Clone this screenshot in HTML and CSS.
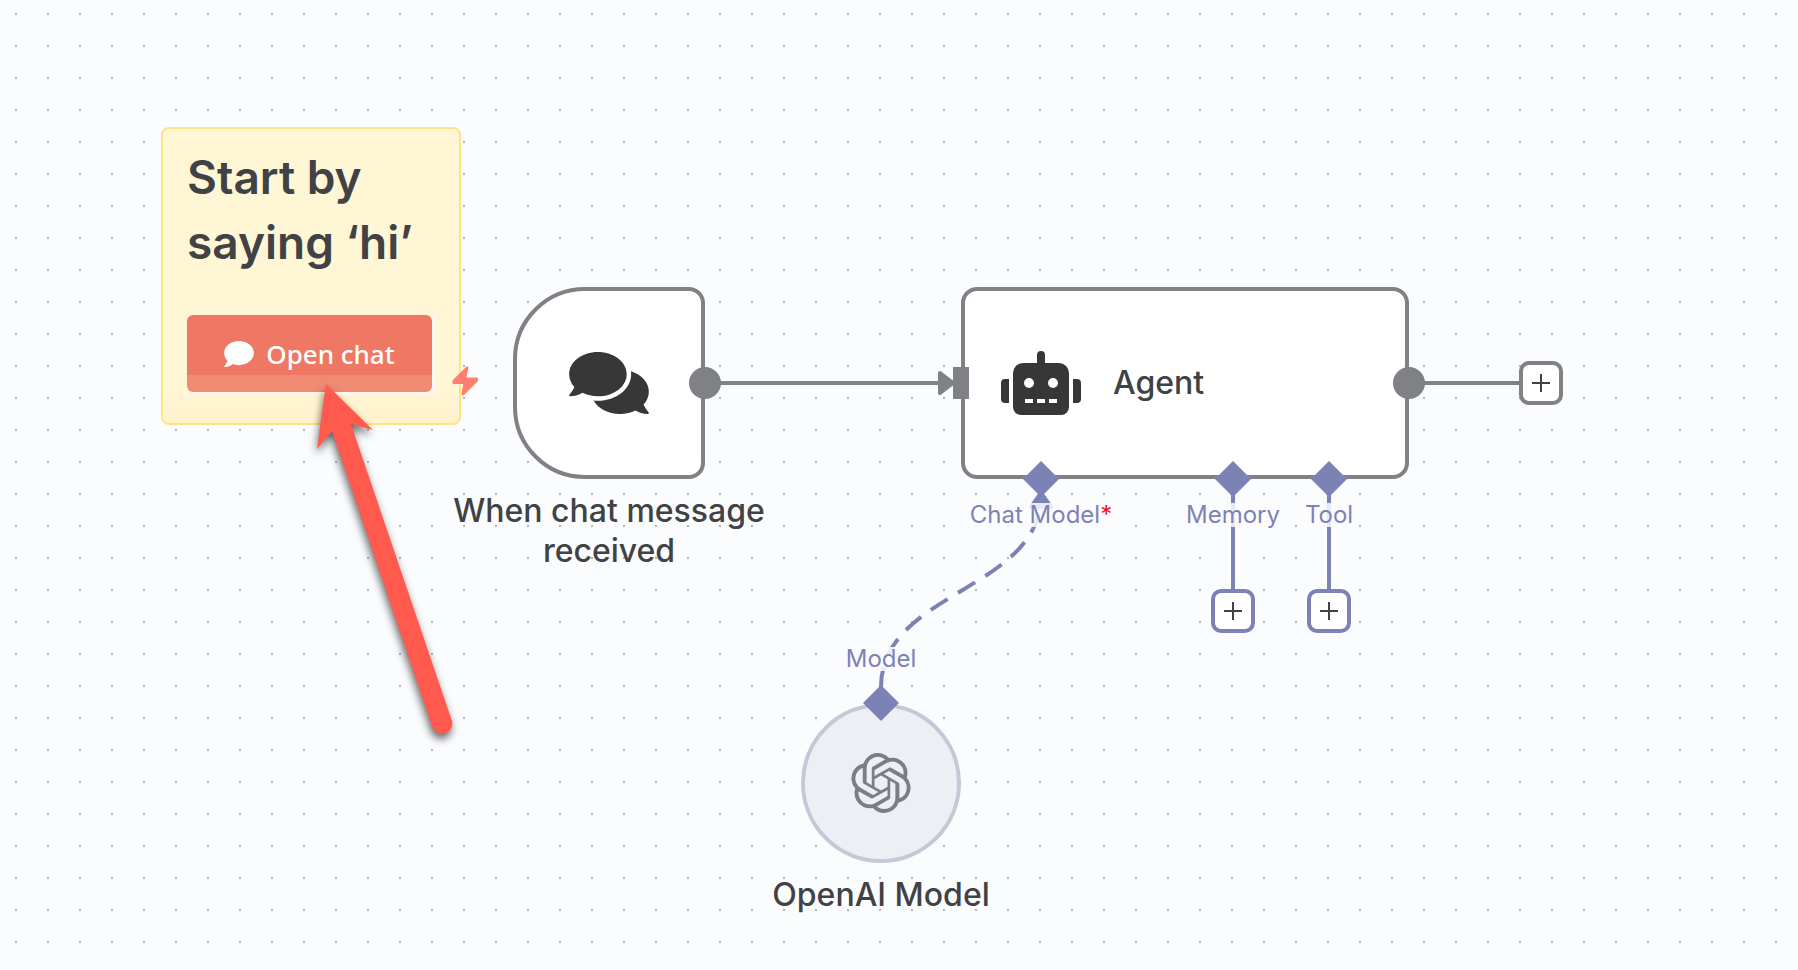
FILE: index.html
```html
<!DOCTYPE html>
<html lang="en">
<head>
<meta charset="utf-8">
<title>Workflow canvas</title>
<link rel="stylesheet" href="styles.css">
</head>
<body>
<main class="canvas">
  <section class="sticky">
    <h1 class="sticky-title">Start by saying ‘hi’</h1>
    <div class="chat-frame">
      <button class="chat-button" type="button">
        <svg class="chat-icon" viewBox="0 32 512 448" aria-hidden="true"><path d="M256 32C114.6 32 0 125.1 0 240c0 49.6 21.4 95 57 130.7C44.5 421.1 2.7 466 2.2 466.5c-2.2 2.3-2.8 5.7-1.5 8.7S4.8 480 8 480c66.3 0 116-31.8 140.6-51.4 32.7 12.3 69 19.4 107.4 19.4 141.4 0 256-93.1 256-208S397.4 32 256 32z"/></svg>
        <span>Open chat</span>
      </button>
    </div>
  </section>

  <svg class="layer" aria-hidden="true">
    <g class="edge-main">
      <path d="M705 383H942"/>
      <path d="M1409 383H1519"/>
    </g>
    <path class="arrowhead-main" d="M940 373L953 383L940 393Z"/>
    <g class="edge-ai">
      <path class="edge-dashed" d="M881 687C881 591 1041 591 1041 495"/>
      <path d="M1233 479V589"/>
      <path d="M1329 479V589"/>
    </g>
    <path class="arrowhead-ai" d="M1031 507L1041 493L1051 507Z"/>
  </svg>

  <article class="node trigger">
    <svg class="comments-icon" viewBox="0 32 576 448" aria-hidden="true"><path d="M416 192c0-88.4-93.1-160-208-160S0 103.6 0 192c0 34.3 14.1 65.9 38 92-13.4 30.2-35.5 54.2-35.8 54.5-2.2 2.3-2.8 5.7-1.5 8.7S4.8 352 8 352c36.6 0 66.9-12.3 88.7-25 32.2 15.7 70.3 25 111.3 25 114.9 0 208-71.6 208-160zm122 220c23.9-26 38-57.7 38-92 0-66.9-53.5-124.2-129.3-148.1.9 6.6 1.3 13.3 1.3 20.1 0 105.9-107.7 192-240 192-10.8 0-21.3-.8-31.7-1.9C207.8 439.6 281.8 480 368 480c41 0 79.1-9.2 111.3-25 21.8 12.7 52.1 25 88.7 25 3.2 0 6.1-1.9 7.3-4.8 1.3-2.9.7-6.3-1.5-8.7-.3-.3-22.4-24.2-35.8-54.5z"/></svg>
  </article>
  <p class="caption caption-trigger">When chat message received</p>

  <article class="node agent">
    <svg class="robot-icon" viewBox="0 0 640 512" aria-hidden="true"><path d="M32 224H64V416H32A32 32 0 0 1 0 384V256A32 32 0 0 1 32 224Zm512-48V448a64 64 0 0 1-64 64H160a64 64 0 0 1-64-64V176a80 80 0 0 1 80-80H288V32a32 32 0 0 1 64 0V96H464A80 80 0 0 1 544 176ZM264 256a40 40 0 1 0-40 40A40 40 0 0 0 264 256Zm-8 128H192v32h64Zm96 0H288v32h64ZM456 256a40 40 0 1 0-40 40A40 40 0 0 0 456 256Zm-8 128H384v32h64ZM640 256V384a32 32 0 0 1-32 32H576V224h32A32 32 0 0 1 640 256Z"/></svg>
    <span>Agent</span>
  </article>

  <article class="node model">
    <svg class="openai-icon" viewBox="0 0 24 24" aria-hidden="true"><path d="M22.2819 9.8211a5.9847 5.9847 0 0 0-.5157-4.9108 6.0462 6.0462 0 0 0-6.5098-2.9A6.0651 6.0651 0 0 0 4.9807 4.1818a5.9847 5.9847 0 0 0-3.9977 2.9 6.0462 6.0462 0 0 0 .7427 7.0966 5.98 5.98 0 0 0 .511 4.9107 6.051 6.051 0 0 0 6.5146 2.9001A5.9847 5.9847 0 0 0 13.2599 24a6.0557 6.0557 0 0 0 5.7718-4.2058 5.9894 5.9894 0 0 0 3.9977-2.9001 6.0557 6.0557 0 0 0-.7475-7.0729zm-9.022 12.6081a4.4755 4.4755 0 0 1-2.8764-1.0408l.1419-.0804 4.7783-2.7582a.7948.7948 0 0 0 .3927-.6813v-6.7369l2.02 1.1686a.071.071 0 0 1 .038.052v5.5826a4.504 4.504 0 0 1-4.4945 4.4944zm-9.6607-4.1254a4.4708 4.4708 0 0 1-.5346-3.0137l.142.0852 4.783 2.7582a.7712.7712 0 0 0 .7806 0l5.8428-3.3685v2.3324a.0804.0804 0 0 1-.0332.0615L9.74 19.9502a4.4992 4.4992 0 0 1-6.1408-1.6464zM2.3408 7.8956a4.485 4.485 0 0 1 2.3655-1.9728V11.6a.7664.7664 0 0 0 .3879.6765l5.8144 3.3543-2.0201 1.1685a.0757.0757 0 0 1-.071 0l-4.8303-2.7865A4.504 4.504 0 0 1 2.3408 7.872zm16.5963 3.8558L13.1038 8.364 15.1192 7.2a.0757.0757 0 0 1 .071 0l4.8303 2.7913a4.4944 4.4944 0 0 1-.6765 8.1042v-5.6772a.79.79 0 0 0-.407-.667zm2.0107-3.0231l-.142-.0852-4.7735-2.7818a.7759.7759 0 0 0-.7854 0L9.409 9.2297V6.8974a.0662.0662 0 0 1 .0284-.0615l4.8303-2.7866a4.4992 4.4992 0 0 1 6.6802 4.66zM8.3065 12.863l-2.02-1.1638a.0804.0804 0 0 1-.038-.0567V6.0742a4.4992 4.4992 0 0 1 7.3757-3.4537l-.142.0805L8.704 5.459a.7948.7948 0 0 0-.3927.6813zm1.0976-2.3654l2.602-1.4998 2.6069 1.4998v2.9994l-2.5974 1.4997-2.6067-1.4997Z"/></svg>
  </article>
  <p class="caption caption-model">OpenAI Model</p>

  <span class="port port-chat">Chat Model<span class="required">*</span></span>
  <span class="port port-memory">Memory</span>
  <span class="port port-tool">Tool</span>
  <span class="port port-model">Model</span>

  <button class="add add-main" type="button" aria-label="Add next node"></button>
  <button class="add add-memory" type="button" aria-label="Add memory"></button>
  <button class="add add-tool" type="button" aria-label="Add tool"></button>

  <svg class="layer" aria-hidden="true">
    <g class="handle-main">
      <circle cx="705" cy="383" r="16"/>
      <circle cx="1409" cy="383" r="16"/>
      <rect x="953" y="367" width="16" height="32"/>
    </g>
    <g class="handle-ai">
      <path d="M1041 461l18 18-18 18-18-18z"/>
      <path d="M1233 461l18 18-18 18-18-18z"/>
      <path d="M1329 461l18 18-18 18-18-18z"/>
      <path d="M881 685l18 18-18 18-18-18z"/>
    </g>
    <path class="bolt" d="M467 368L454 381V382.500H465L463 394L476.500 380.500V379H464.500Z"/>
    <path class="pointer" d="M326 384L373 430L351 424L452 721A10 10 0 0 1 432 726L332 431L317 449Z"/>
  </svg>
</main>
</body>
</html>
```

FILE: styles.css
```css
* {
  box-sizing: border-box;
}

body {
  margin: 0;
  font-family: Inter, "Liberation Sans", sans-serif;
  color: #414244;
}

.canvas {
  position: relative;
  min-height: 100vh;
  overflow: hidden;
  background-color: #fbfcfe;
  background-image: conic-gradient(from 0deg at 2px 2px, transparent 0 75%, #b4b4b6 75%);
  background-size: 32px 32px;
  background-position: 15px 13px;
}

.layer {
  position: absolute;
  inset: 0;
  width: 100%;
  height: 100%;
  pointer-events: none;
}

.sticky {
  position: absolute;
  left: 161px;
  top: 127px;
  width: 300px;
  padding: 16px 24px 29px;
  border: 2px solid #ffe385;
  border-radius: 8px;
  background: linear-gradient(#fff6d6 88%, #fff2cc);
}

.sticky-title {
  margin: 0 0 40px;
  font-size: 46px;
  line-height: 65px;
  font-weight: 600;
}

.chat-frame {
  padding: 0 3px 2px 0;
  background: #fdf8f4;
}

.chat-button {
  display: flex;
  align-items: center;
  justify-content: center;
  gap: 12px;
  width: 100%;
  height: 77px;
  padding: 0;
  border: 0;
  border-radius: 6px;
  background: linear-gradient(#ee7864 60px, #f18a73 60px);
  color: #fff;
  font: 500 26px/36px "Noto Sans", "Open Sans", sans-serif;
}

.chat-icon {
  width: 30px;
  height: 26px;
  fill: currentColor;
}

.node {
  position: absolute;
  display: flex;
  align-items: center;
  border: 4px solid #808185;
  background: #fff;
}

.trigger {
  left: 513px;
  top: 287px;
  width: 192px;
  height: 192px;
  justify-content: center;
  border-radius: 72px 16px 16px 72px;
}

.agent {
  left: 961px;
  top: 287px;
  width: 448px;
  height: 192px;
  gap: 32px;
  padding-left: 36px;
  border-radius: 16px;
  font-size: 32px;
  line-height: 40px;
  font-weight: 500;
}

.model {
  left: 801px;
  top: 703px;
  width: 160px;
  height: 160px;
  justify-content: center;
  border-color: #c3c9d5;
  border-radius: 50%;
  background: #eeeff5;
}

.comments-icon {
  width: 80px;
  height: 62px;
  fill: #373737;
}

.robot-icon {
  width: 80px;
  height: 64px;
  fill: #373737;
}

.openai-icon {
  width: 60px;
  height: 60px;
  fill: #7d7d87;
}

.caption {
  position: absolute;
  width: 320px;
  margin: 0;
  font-size: 32px;
  line-height: 40px;
  font-weight: 500;
  text-align: center;
}

.caption-trigger {
  left: 449px;
  top: 491px;
}

.caption-model {
  left: 721px;
  top: 875px;
}

.port {
  position: absolute;
  transform: translateX(-50%);
  background: rgba(251, 252, 254, 0.85);
  color: #7d82b6;
  font-size: 24px;
  line-height: 24px;
  white-space: nowrap;
}

.port-chat {
  left: 1041px;
  top: 503px;
}

.port-memory {
  left: 1233px;
  top: 503px;
}

.port-tool {
  left: 1329px;
  top: 503px;
}

.port-model {
  left: 881px;
  top: 647px;
}

.required {
  color: #f01428;
}

.add {
  position: absolute;
  width: 44px;
  height: 44px;
  padding: 0;
  border: 4px solid #7d82b6;
  border-radius: 10px;
  background:
    linear-gradient(#414244, #414244) center / 18px 2px no-repeat,
    linear-gradient(#414244, #414244) center / 2px 18px no-repeat,
    #fff;
}

.add-main {
  left: 1519px;
  top: 361px;
  border-color: #808185;
}

.add-memory {
  left: 1211px;
  top: 589px;
}

.add-tool {
  left: 1307px;
  top: 589px;
}

.edge-main,
.edge-ai {
  fill: none;
  stroke-width: 4px;
}

.edge-main {
  stroke: #808185;
}

.edge-ai {
  stroke: #7d82b6;
}

.edge-dashed {
  stroke-dasharray: 20px 12px;
}

.arrowhead-main,
.arrowhead-ai {
  stroke-width: 4px;
  stroke-linejoin: round;
}

.arrowhead-main {
  fill: #808185;
  stroke: #808185;
}

.arrowhead-ai {
  fill: #7d82b6;
  stroke: #7d82b6;
}

.handle-main {
  fill: #808185;
}

.handle-ai {
  fill: #7d82b6;
}

.bolt {
  fill: #ff7f6e;
  stroke: #ff7f6e;
  stroke-width: 3px;
  stroke-linejoin: round;
}

.pointer {
  fill: #ff5a4d;
  filter: drop-shadow(-1px 5px 4px rgba(0, 0, 0, 0.6));
}
```
